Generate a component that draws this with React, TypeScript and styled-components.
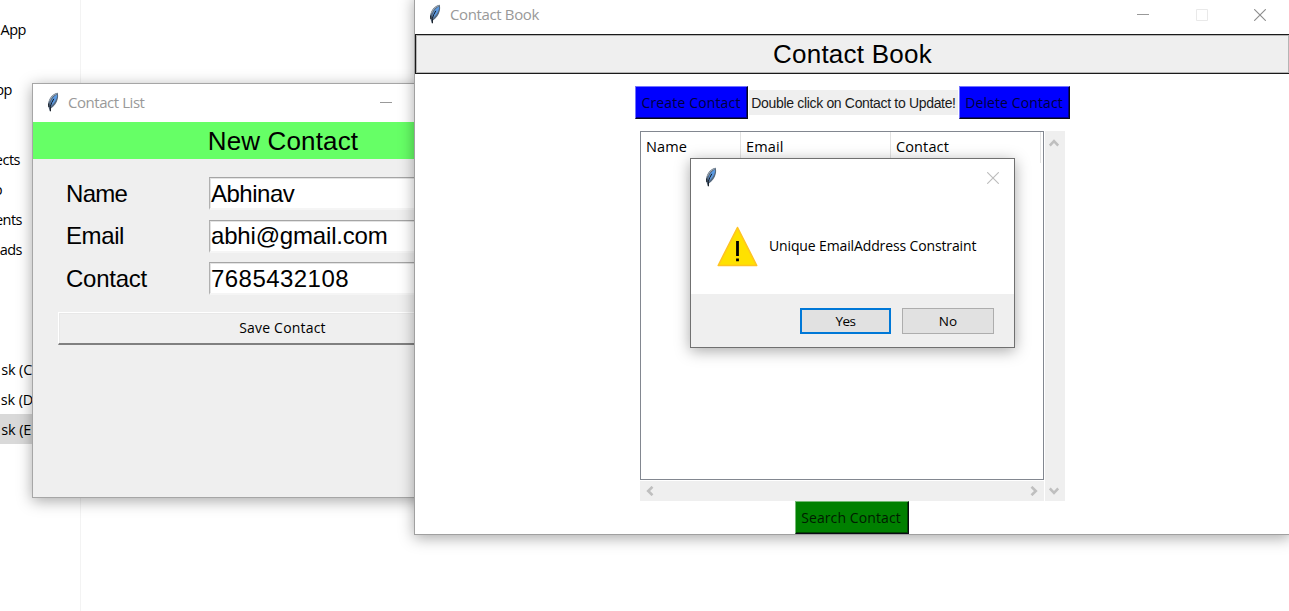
import React from "react";
import styled, { createGlobalStyle } from "styled-components";

const ui = `"Open Sans", "Noto Sans", sans-serif`;
const arial = `"Liberation Sans", Arial, sans-serif`;

const GlobalStyle = createGlobalStyle`
  * { box-sizing: border-box; }
  body { margin: 0; background: #fff; overflow: hidden; }
`;

const Desktop = styled.main`
  position: relative;
  width: 1289px;
  height: 611px;
  overflow: hidden;
  background: #fff;
  font-family: ${ui};
  color: #000;
`;

const Text = styled.span<{ $size: number; $spacing?: number; $color?: string; $arial?: boolean }>`
  font-family: ${(p) => (p.$arial ? arial : ui)};
  font-size: ${(p) => p.$size}px;
  letter-spacing: ${(p) => p.$spacing ?? 0}px;
  color: ${(p) => p.$color ?? "#000"};
  line-height: 1;
  white-space: pre;
`;

const Sidebar = styled.nav`
  width: 81px;
  height: 611px;
  padding-top: 14px;
  border-right: 1px solid #f3f3f3;
`;

const SideRow = styled.div<{ $gap?: number; $end: number; $active?: boolean }>`
  display: flex;
  align-items: center;
  justify-content: flex-end;
  height: 30px;
  margin-top: ${(p) => p.$gap ?? 0}px;
  padding-top: 2px;
  padding-right: ${(p) => 80 - p.$end}px;
  background: ${(p) => (p.$active ? "#d9d9d9" : "transparent")};
`;

const Window = styled.section<{ $x: number; $y: number; $w: number; $h: number; $bg: string; $edge: string }>`
  position: absolute;
  left: ${(p) => p.$x}px;
  top: ${(p) => p.$y}px;
  width: ${(p) => p.$w}px;
  height: ${(p) => p.$h}px;
  display: flex;
  flex-direction: column;
  border: 1px solid ${(p) => p.$edge};
  background: ${(p) => p.$bg};
  box-shadow: 0 3px 14px rgba(0, 0, 0, 0.34);
`;

const TitleBar = styled.header<{ $h: number; $left: number }>`
  flex: none;
  display: flex;
  align-items: center;
  height: ${(p) => p.$h}px;
  padding-left: ${(p) => p.$left}px;
  background: #fff;
`;

const TitleText = styled(Text)`
  margin-left: 9px;
  padding-bottom: 2px;
  color: #999;
`;

const Controls = styled.div<{ $right: number; $gap?: number }>`
  display: flex;
  gap: ${(p) => p.$gap ?? 46}px;
  margin-left: auto;
  margin-right: ${(p) => p.$right}px;
`;

const FormHeader = styled.div`
  flex: none;
  display: flex;
  align-items: center;
  justify-content: center;
  height: 37px;
  padding-top: 1px;
  background: #66ff66;
`;

const Form = styled.div`
  display: grid;
  grid-template-columns: 143px 300px;
  grid-auto-rows: 33px;
  row-gap: 9.5px;
  margin: 18px 0 0 33px;
`;

const Field = styled.label`
  display: contents;
`;

const FieldName = styled(Text)`
  align-self: center;
`;

const Input = styled.div`
  display: flex;
  align-items: center;
  padding: 1px 0 0 1px;
  border: 2px solid;
  border-color: #a5a5a5 #fff #f5f5f5 #b0b0b0;
  background: #fff;
  border-left-width: 1px;
  border-top-width: 1px;
  box-shadow: inset 1px 1px 0 #e3e3e3;
`;

const SaveButton = styled.div`
  display: flex;
  align-items: center;
  justify-content: center;
  width: 449px;
  height: 33px;
  margin: 17px 0 0 25px;
  border: 1px solid #fff;
  border-bottom: 2px solid #808080;
  background: #efefef;
  box-shadow: inset 1px 1px 0 #e8e8e8;
`;

const BookHeader = styled.div`
  flex: none;
  display: flex;
  align-items: center;
  justify-content: center;
  height: 40px;
  border: 1px solid #1a1a1a;
  background: #efefef;
  box-shadow: inset 0 0 0 1px #b5b5b5;
`;

const BookBody = styled.div`
  display: flex;
  flex-direction: column;
  align-items: center;
  padding-top: 12px;
`;

const Toolbar = styled.div`
  display: flex;
  align-items: center;
  gap: 1px;
`;

const ToolButton = styled.div<{ $w: number; $bg: string; $light: string }>`
  display: flex;
  align-items: center;
  justify-content: center;
  width: ${(p) => p.$w}px;
  height: 33px;
  padding-right: 1px;
  background: ${(p) => p.$bg};
  border: 1px solid ${(p) => p.$light};
  border-bottom-color: #0a0a14;
  border-right-color: #0a0a14;
  box-shadow: inset -1px -1px 0 rgba(0, 0, 0, 0.45);
`;

const SearchButton = styled(ToolButton)`
  margin-right: 2px;
`;

const Hint = styled.div`
  display: flex;
  align-items: center;
  justify-content: center;
  width: 209px;
  height: 25px;
  background: #efefef;
`;

const TreeArea = styled.div`
  display: grid;
  grid-template-columns: 404px 20px;
  grid-template-rows: 349px 20px;
  column-gap: 1px;
  row-gap: 1px;
  margin-top: 12px;
`;

const Tree = styled.div`
  border: 1px solid #828790;
  background: #fff;
`;

const TreeHead = styled.div`
  display: grid;
  grid-template-columns: 100px 150px 150px;
  height: 31px;
`;

const HeadCell = styled.div`
  display: flex;
  align-items: center;
  padding-left: 5px;
  border-right: 1px solid #e2e2e2;
`;

const VScroll = styled.div`
  grid-column: 2;
  grid-row: 1 / 3;
  display: flex;
  flex-direction: column;
  align-items: center;
  justify-content: space-between;
  padding: 7px 2px 5px 0;
  background: #efefef;
`;

const HScroll = styled.div`
  display: flex;
  align-items: center;
  justify-content: space-between;
  padding: 0 5px;
  background: #efefef;
`;

const DialogBody = styled.div`
  flex: 1;
  display: flex;
  align-items: center;
  padding: 1px 0 0 26px;
  gap: 11px;
`;

const DialogFooter = styled.footer`
  display: flex;
  align-items: center;
  justify-content: flex-end;
  gap: 11px;
  height: 53px;
  padding: 1px 20px 0 0;
  background: #efefef;
`;

const DialogButton = styled.div<{ $focus?: boolean }>`
  display: flex;
  align-items: center;
  justify-content: center;
  width: ${(p) => (p.$focus ? 91 : 92)}px;
  height: 26px;
  padding-top: 2px;
  background: #e1e1e1;
  border: ${(p) => (p.$focus ? "2px solid #0078d7" : "1px solid #adadad")};
`;

const Feather = () => (
  <svg width="12" height="22" viewBox="0 0 12 22">
    <path d="M10.7.7C7.200 1.200 3.600 4.200 1.900 8.400c-1 2.800-1.100 5-.3 7l1.300 3.800h.8l.2-2.800C7.500 14.200 9.800 10.800 10.800 6.800c.5-2.200.4-4.300-.1-6.100Z" fill="#56697f" />
    <path d="M9.800 2.400C6.800 4 4.600 7 3.700 10.200l-.6 4.500C6.400 12.400 8.900 8.800 9.900 5.200c.3-1.100.2-2-.1-2.800Z" fill="#5b9be4" />
    <path d="M6.800 6.800C5.200 9.400 4 12 3.300 14.500l.1 4.700M1.700 11.500l.2 3.500" fill="none" stroke="#10151c" strokeWidth="1" />
    <path d="M9.800 1.600C6.300 2.800 3.600 5.900 2.400 9.300" fill="none" stroke="#adb3b9" strokeWidth=".9" />
  </svg>
);

const Minimize = () => (
  <svg width="12" height="12" viewBox="0 0 12 12">
    <path d="M0 5.500h12" stroke="#999" />
  </svg>
);

const Maximize = () => (
  <svg width="12" height="12" viewBox="0 0 12 12">
    <path d="M.5.5h11v11H.5Z" fill="none" stroke="#e9e9e9" />
  </svg>
);

const Close = ({ color = "#8c8c8c" }: { color?: string }) => (
  <svg width="12" height="12" viewBox="0 0 12 12">
    <path d="m.2.2 11.600 11.600M11.800.2.2 11.800" stroke={color} strokeWidth="1.100" />
  </svg>
);

const Arrow = ({ turn }: { turn: number }) => (
  <svg width="10" height="10" viewBox="0 0 10 10">
    <path d="M.8 7.500 5 3.200l4.200 4.300" fill="none" stroke="#bfbfbf" strokeWidth="2.600" transform={`rotate(${turn} 5 5)`} />
  </svg>
);

const Warning = () => (
  <svg width="41" height="41" viewBox="0 0 41 41">
    <path d="M20.500 1.500 39.700 39.500H1.200Z" fill="#ffe100" stroke="#ffc423" strokeWidth="1.600" strokeLinejoin="round" />
    <path d="M19.100 15h2.800v15h-2.800ZM19.100 32.500h2.800v2.700h-2.800Z" fill="#000" />
  </svg>
);

const places = [
  { name: "App", end: 26, gap: 0 },
  { name: "pp", end: 12, gap: 30 },
  { name: "ects", end: 20, gap: 40 },
  { name: "p", end: 2, gap: 0 },
  { name: "ents", end: 22, gap: 0 },
  { name: "ads", end: 22, gap: 0 },
  { name: "sk (C:)", end: 40, gap: 90 },
  { name: "sk (D:)", end: 41, gap: 0 },
  { name: "sk (E:)", end: 39, gap: 0, active: true },
];

const fields = [
  { name: "Name", nameSpacing: -0.7, value: "Abhinav", spacing: -0.5 },
  { name: "Email", nameSpacing: -0.4, value: "abhi@gmail.com", spacing: -0.18 },
  { name: "Contact", nameSpacing: -0.25, value: "7685432108", spacing: 0.45 },
];

export default function App() {
  return (
    <Desktop>
      <GlobalStyle />
      <Sidebar>
        {places.map((p) => (
          <SideRow key={p.name} $end={p.end} $gap={p.gap} $active={p.active}>
            <Text $size={14.5} $spacing={p.name.startsWith("sk") ? -0.15 : -0.5}>{p.name}</Text>
          </SideRow>
        ))}
      </Sidebar>

      <Window $x={32} $y={83} $w={502} $h={415} $bg="#efefef" $edge="#a6a6a6">
        <TitleBar $h={38} $left={14}>
          <Feather />
          <TitleText $size={15} $spacing={-0.45}>Contact List</TitleText>
          <Controls $right={141}>
            <Minimize />
          </Controls>
        </TitleBar>
        <FormHeader>
          <Text $arial $size={26} $spacing={0.15}>New Contact</Text>
        </FormHeader>
        <Form>
          {fields.map((f) => (
            <Field key={f.name}>
              <FieldName $arial $size={24} $spacing={f.nameSpacing}>{f.name}</FieldName>
              <Input>
                <Text $arial $size={24} $spacing={f.spacing}>{f.value}</Text>
              </Input>
            </Field>
          ))}
        </Form>
        <SaveButton>
          <Text $size={14} $spacing={0.2}>Save Contact</Text>
        </SaveButton>
      </Window>

      <Window $x={414} $y={-5} $w={877} $h={540} $bg="#fff" $edge="#a0a0a0">
        <TitleBar $h={38} $left={14}>
          <Feather />
          <TitleText $size={15} $spacing={-0.37}>Contact Book</TitleText>
          <Controls $right={24} $gap={46.5}>
            <Minimize />
            <Maximize />
            <Close />
          </Controls>
        </TitleBar>
        <BookHeader>
          <Text $arial $size={26} $spacing={0.25}>Contact Book</Text>
        </BookHeader>
        <BookBody>
          <Toolbar>
            <ToolButton $w={113} $bg="#0000ff" $light="#7474ff">
              <Text $size={14} $spacing={0.15} $color="#00003c">Create Contact</Text>
            </ToolButton>
            <Hint>
              <Text $arial $size={14} $spacing={-0.33} $color="#1a1a1a">Double click on Contact to Update!</Text>
            </Hint>
            <ToolButton $w={111} $bg="#0000ff" $light="#7474ff">
              <Text $size={14} $spacing={0.1} $color="#00003c">Delete Contact</Text>
            </ToolButton>
          </Toolbar>
          <TreeArea>
            <Tree>
              <TreeHead>
                {["Name", "Email", "Contact"].map((name) => (
                  <HeadCell key={name}>
                    <Text $size={14.5} $spacing={0.12}>{name}</Text>
                  </HeadCell>
                ))}
              </TreeHead>
            </Tree>
            <VScroll>
              <Arrow turn={0} />
              <Arrow turn={180} />
            </VScroll>
            <HScroll>
              <Arrow turn={-90} />
              <Arrow turn={90} />
            </HScroll>
          </TreeArea>
          <SearchButton $w={114} $bg="#008000" $light="#74ba74">
            <Text $size={14} $spacing={0.1} $color="#001c00">Search Contact</Text>
          </SearchButton>
        </BookBody>
      </Window>

      <Window $x={690} $y={158} $w={325} $h={190} $bg="#fff" $edge="#707070">
        <TitleBar $h={38} $left={14}>
          <Feather />
          <Controls $right={15}>
            <Close color="#bcbcbc" />
          </Controls>
        </TitleBar>
        <DialogBody>
          <Warning />
          <Text $size={14} $spacing={-0.13}>Unique EmailAddress Constraint</Text>
        </DialogBody>
        <DialogFooter>
          <DialogButton $focus>
            <Text $size={13.5} $spacing={-0.6}>Yes</Text>
          </DialogButton>
          <DialogButton>
            <Text $size={13.5}>No</Text>
          </DialogButton>
        </DialogFooter>
      </Window>
    </Desktop>
  );
}
